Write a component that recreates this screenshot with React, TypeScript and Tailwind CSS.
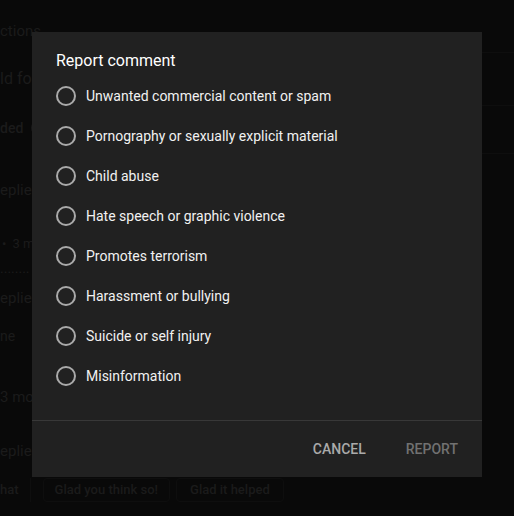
import React from "react";

const reasons = [
  "Unwanted commercial content or spam",
  "Pornography or sexually explicit material",
  "Child abuse",
  "Hate speech or graphic violence",
  "Promotes terrorism",
  "Harassment or bullying",
  "Suicide or self injury",
  "Misinformation",
];

export default function App() {
  return (
    <div
      className="relative w-[514px] h-[516px] overflow-hidden bg-[#090909] text-[#1b1b1b]"
      style={{ fontFamily: "Roboto, 'Liberation Sans', sans-serif" }}
    >
      {/* background page (dimmed) */}
      <div className="flex flex-col text-[15px] leading-5">
        <div className="mt-[21px] h-5">ctions</div>
        <div className="mt-[28px] h-5 text-[16px]">ld for</div>
        <div className="mt-[29px] h-5 flex items-center gap-[8px] font-medium text-[14px]">
          <span>ded</span>
          <span className="w-[16px] h-[16px] rounded-full bg-[#191919]" />
        </div>
        <div className="mt-[42px] h-5">eplies</div>
        <div className="mt-[34px] h-5 text-[13px] flex gap-[6px] pl-[2px]">
          <span>•</span>
          <span>3 m</span>
        </div>
        <div className="mt-[4px] h-5 text-[14px]">........ V</div>
        <div className="mt-[10px] h-5">eplies</div>
        <div className="mt-[18px] h-5 text-[14px]">ne</div>
        <div className="mt-[41px] h-5">3 mor</div>
        <div className="mt-[34px] h-5">eplies</div>
        <div className="mt-[17px] h-[24px] flex items-center text-[13px] font-medium text-[#1b1b1b]">
          <div className="h-full flex items-center pr-[11px] border-r border-[#0e0e0e]">hat</div>
          <div className="ml-[12px] h-full flex items-center px-[11px] border border-[#0e0e0e] rounded">Glad you think so!</div>
          <div className="ml-[6px] h-full flex items-center px-[13px] border border-[#0e0e0e] rounded">Glad it helped</div>
        </div>
      </div>

      {/* right side faint lines */}
      <div className="absolute left-[482px] top-[52px] w-[32px] h-px bg-[#0e0e0e]" />
      <div className="absolute left-[482px] top-[105px] w-[32px] h-px bg-[#0e0e0e]" />
      <div className="absolute left-[482px] top-[153px] w-[32px] h-px bg-[#0e0e0e]" />

      {/* dialog */}
      <div className="absolute left-[32px] top-[32px] w-[450px] h-[445px] bg-[#212121] flex flex-col">
        <div className="pt-[17px] pl-[24px] text-[16px] leading-6 text-white">Report comment</div>
        <div className="mt-[3px] flex flex-col">
          {reasons.map((r) => (
            <div key={r} className="h-[40px] flex items-center pl-[24px]">
              <span className="w-[20px] h-[20px] rounded-full border-2 border-[#aaaaaa] shrink-0" />
              <span className="ml-[10px] text-[14px] text-[#f1f1f1]">{r}</span>
            </div>
          ))}
        </div>
        <div className="mt-auto border-t border-[#383838] h-[57px] flex items-center justify-end pr-[24px] gap-[40px] text-[14px] font-medium uppercase">
          <span className="text-[#aaaaaa]">Cancel</span>
          <span className="text-[#717171]">Report</span>
        </div>
      </div>
    </div>
  );
}
